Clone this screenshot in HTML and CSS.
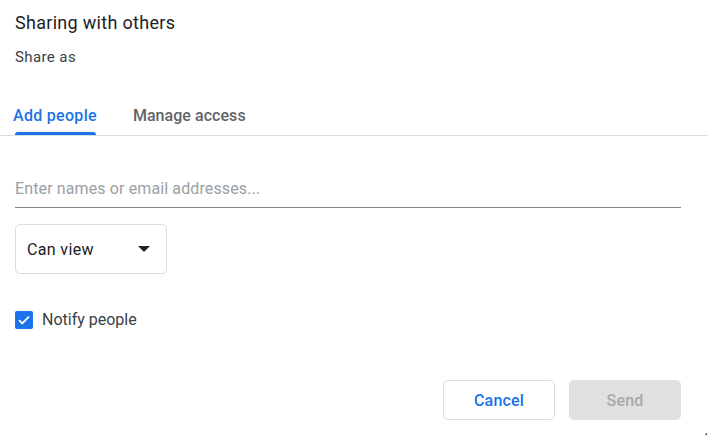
FILE: index.html
```html
<!DOCTYPE html>
<html lang="en">
<head>
<meta charset="utf-8">
<title>Sharing with others</title>
<link rel="stylesheet" href="styles.css">
</head>
<body>
<div class="dialog">
  <div class="header">
    <h1 class="title">Sharing with others</h1>
    <div class="subtitle">Share as</div>
  </div>
  <div class="tabs">
    <div class="tab tab-active">Add people</div>
    <div class="tab">Manage access</div>
  </div>
  <div class="content">
    <input class="people-input" type="text" placeholder="Enter names or email addresses...">
    <div class="role-select">
      <span class="role-label">Can view</span>
      <svg class="caret" width="12" height="6" viewBox="0 0 12 6"><path d="M0 0h12L6 6z" fill="#202124"/></svg>
    </div>
    <label class="notify">
      <span class="checkbox">
        <svg width="18" height="18" viewBox="0 0 18 18"><path d="M4 9.2l3.2 3.2L14 5.6" fill="none" stroke="#fff" stroke-width="1.8"/></svg>
      </span>
      <span class="notify-label">Notify people</span>
    </label>
    <div class="actions">
      <button class="btn btn-cancel" type="button">Cancel</button>
      <button class="btn btn-send" type="button" disabled>Send</button>
    </div>
  </div>
  <div class="corner"></div>
</div>
</body>
</html>
```

FILE: styles.css
```css
* { box-sizing: border-box; }
html, body { margin: 0; padding: 0; background: #fff; }
body {
  font-family: Roboto, "Liberation Sans", Arial, sans-serif;
  color: #202124;
  width: 722px;
  height: 441px;
  overflow: hidden;
}
.dialog {
  position: relative;
  width: 708px;
  height: 441px;
}
.header {
  padding: 11px 0 0 15px;
}
.title {
  margin: 0;
  font-size: 18px;
  line-height: 24px;
  font-weight: 400;
  letter-spacing: 0.3px;
  color: #202124;
}
.subtitle {
  margin-top: 12px;
  font-size: 15px;
  line-height: 20px;
  letter-spacing: 0.4px;
  color: #3c4043;
}
.tabs {
  display: flex;
  gap: 36px;
  margin-top: 39px;
  padding-left: 13px;
  border-bottom: 1px solid #dadce0;
}
.tab {
  position: relative;
  font-size: 16px;
  line-height: 20px;
  font-weight: 500;
  letter-spacing: 0.05px;
  color: #5f6368;
  padding-bottom: 9px;
}
.tab-active { color: #1a73e8; letter-spacing: 0.3px; }
.tab-active::after {
  content: "";
  position: absolute;
  left: 2px;
  right: 1px;
  bottom: 0;
  height: 3px;
  background: #1a73e8;
  border-radius: 3px 3px 0 0;
}
.content {
  padding: 0 27px 0 15px;
  display: flex;
  flex-direction: column;
  align-items: flex-start;
}
.people-input {
  margin-top: 42px;
  width: 100%;
  height: 30px;
  padding: 0 0 9px 0;
  border: none;
  border-bottom: 1px solid #80868b;
  font-family: inherit;
  font-size: 16px;
  line-height: 20px;
  letter-spacing: 0.12px;
  color: #202124;
  outline: none;
  background: transparent;
}
.people-input::placeholder { color: #9aa0a6; opacity: 1; }
.role-select {
  margin-top: 16px;
  width: 152px;
  height: 50px;
  border: 1px solid #dadce0;
  border-radius: 5px;
  display: flex;
  align-items: center;
  justify-content: space-between;
  padding: 1px 16px 0 11px;
}
.role-label {
  font-size: 16px;
  line-height: 20px;
  letter-spacing: 0.35px;
  color: #202124;
}
.caret { display: block; margin-top: -1px; }
.notify {
  margin-top: 36px;
  display: flex;
  align-items: center;
  gap: 9px;
}
.checkbox {
  width: 18px;
  height: 18px;
  border-radius: 2px;
  background: #1a73e8;
  display: block;
}
.checkbox svg { display: block; }
.notify-label {
  font-size: 16px;
  line-height: 20px;
  color: #3c4043;
}
.actions {
  margin-top: 50px;
  align-self: stretch;
  display: flex;
  justify-content: flex-end;
  gap: 14px;
}
.btn {
  width: 112px;
  height: 40px;
  border-radius: 5px;
  font-family: inherit;
  font-size: 16px;
  font-weight: 500;
  letter-spacing: 0.2px;
  padding: 0;
}
.btn-cancel {
  background: #fff;
  border: 1px solid #dadce0;
  color: #1a73e8;
}
.btn-send {
  background: #e0e0e0;
  border: none;
  color: #a8a8a8;
}
.corner {
  position: absolute;
  left: 705px;
  top: 433px;
  width: 2px;
  height: 2px;
  border-right: 1px solid #555;
  border-bottom: 1px solid #555;
}
```
